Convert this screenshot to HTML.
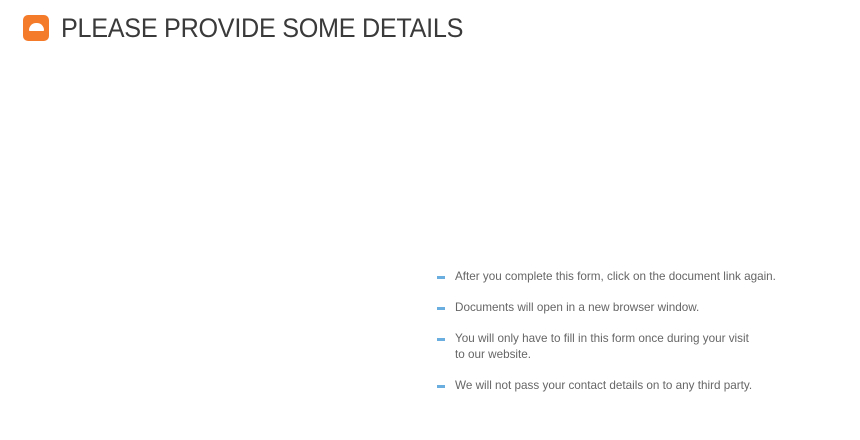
<!DOCTYPE html>
<html><head><meta charset="utf-8"><style>
body{margin:0;width:860px;height:440px;background:#fff;position:relative;font-family:"Liberation Sans",sans-serif;overflow:hidden}
.icon{position:absolute;left:23px;top:15px;width:26px;height:26px;background:#f47b2a;border-radius:5px}
.dome{position:absolute;left:6px;top:8px;width:15px;height:8px;background:#fff;border-radius:8px 8px 1px 1px}
h1{position:absolute;left:61px;top:12px;margin:0;font-weight:normal;font-size:27px;color:#3a3a3a;letter-spacing:-0.3px;white-space:nowrap;line-height:32px;transform:scaleX(0.933);transform-origin:0 0}
.li{position:absolute;left:455px;font-size:11.7px;color:#666;line-height:16px;white-space:nowrap}
.li:before{content:"";position:absolute;left:-18px;top:7px;width:8px;height:3px;background:#6aaee0}
</style></head><body>
<div class="icon"><div class="dome"></div></div>
<h1>PLEASE PROVIDE SOME DETAILS</h1>
<div class="li" style="top:269px">After you complete this form, click on the document link again.</div>
<div class="li" style="top:300px">Documents will open in a new browser window.</div>
<div class="li" style="top:331px">You will only have to fill in this form once during your visit<br>to our website.</div>
<div class="li" style="top:378px">We will not pass your contact details on to any third party.</div>
</body></html>
